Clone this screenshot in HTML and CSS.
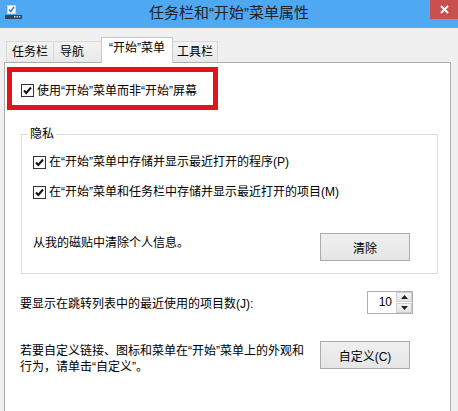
FILE: index.html
```html
<!DOCTYPE html>
<html lang="zh-CN">

<head>
  <meta charset="UTF-8">
  <meta name="viewport" content="width=device-width, initial-scale=1.0">
  <title>任务栏和“开始”菜单属性</title>
  <link rel="stylesheet" href="styles.css">
</head>

<body>
  <div class="window">
    <!-- 标题栏 -->
    <div class="titlebar">
      <div class="app-icon">
        <svg width="17" height="15" viewBox="0 0 17 15">
          <rect x="2.5" y="0.5" width="8" height="8" fill="#fff" stroke="#c9d6e6"/>
          <path d="M4 4.5 L5.8 6.5 L9 2" fill="none" stroke="#2f7fd6" stroke-width="1.6"/>
          <rect x="0" y="10" width="17" height="4" fill="#34435c"/>
          <rect x="9" y="11" width="1.5" height="1.5" fill="#c9d3e0"/>
          <rect x="11.5" y="11" width="1.5" height="1.5" fill="#c9d3e0"/>
          <rect x="14" y="11" width="1.5" height="1.5" fill="#c9d3e0"/>
        </svg>
      </div>
      <div class="title">任务栏和“开始”菜单属性</div>
      <div class="title-right">
        <div class="close">
          <svg width="9" height="9" viewBox="0 0 9 9">
            <path d="M1 1 L8 8 M8 1 L1 8" stroke="#fff" stroke-width="2"/>
          </svg>
        </div>
      </div>
    </div>

    <!-- 选项卡 -->
    <div class="tabs">
      <div class="tab">任务栏</div>
      <div class="tab tab-wide">导航</div>
      <div class="tab tab-active">“开始”菜单</div>
      <div class="tab tab-narrow">工具栏</div>
    </div>

    <div class="panel">
      <div class="highlight">
        <label class="check-row">
          <span class="check"><svg width="11" height="11" viewBox="0 0 11 11"><path d="M2 5.5 L4.3 8 L9 2.5" fill="none" stroke="#111" stroke-width="2"/></svg></span>
          使用“开始”菜单而非“开始”屏幕
        </label>
      </div>

      <fieldset class="group">
        <legend>隐私</legend>
        <label class="check-row group-row">
          <span class="check"><svg width="11" height="11" viewBox="0 0 11 11"><path d="M2 5.5 L4.3 8 L9 2.5" fill="none" stroke="#111" stroke-width="2"/></svg></span>
          在“开始”菜单中存储并显示最近打开的程序(P)
        </label>
        <label class="check-row group-row">
          <span class="check"><svg width="11" height="11" viewBox="0 0 11 11"><path d="M2 5.5 L4.3 8 L9 2.5" fill="none" stroke="#111" stroke-width="2"/></svg></span>
          在“开始”菜单和任务栏中存储并显示最近打开的项目(M)
        </label>
        <div class="clear-row">
          <span class="clear-text">从我的磁贴中清除个人信息。</span>
          <button class="button">清除</button>
        </div>
      </fieldset>

      <div class="jump-row">
        <span>要显示在跳转列表中的最近使用的项目数(J):</span>
        <div class="spinner">
          <span class="spinner-value">10</span>
          <div class="spinner-arrows">
            <span class="arrow"><svg width="7" height="4" viewBox="0 0 7 4"><path d="M0 4 L3.5 0 L7 4 Z" fill="#222"/></svg></span>
            <span class="arrow"><svg width="7" height="4" viewBox="0 0 7 4"><path d="M0 0 L3.5 4 L7 0 Z" fill="#222"/></svg></span>
          </div>
        </div>
      </div>

      <div class="custom-row">
        <p class="custom-text">若要自定义链接、图标和菜单在“开始”菜单上的外观和<br>行为，请单击“自定义”。</p>
        <button class="button">自定义(C)</button>
      </div>
    </div>
  </div>
</body>

</html>
```

FILE: styles.css
```css
body {
  margin: 0;
  padding: 0;
  background-color: #f0f0f0;
  color: #000;
  font-family: "Liberation Sans", "Noto Sans CJK SC", sans-serif;
  font-size: 12px;
  overflow: hidden;
}

.window {
  width: 458px;
  height: 411px;
  display: flex;
  flex-direction: column;
  overflow: hidden;
}

/* 标题栏 */
.titlebar {
  height: 28px;
  flex-shrink: 0;
  background-color: #4ea8f2;
  display: grid;
  grid-template-columns: 1fr auto 1fr;
}

.app-icon {
  padding: 5px 0 0 5px;
}

.title {
  font-size: 15px;
  line-height: 26px;
  color: #222;
}

.title-right {
  display: flex;
  justify-content: flex-end;
  align-items: flex-start;
}

.close {
  width: 28px;
  height: 19px;
  background-color: #c9504e;
  display: flex;
  align-items: center;
  justify-content: center;
}

/* 选项卡 */
.tabs {
  height: 34px;
  flex-shrink: 0;
  display: flex;
  align-items: flex-end;
  padding-left: 6px;
}

.tab {
  height: 21px;
  box-sizing: border-box;
  padding: 0 5px;
  line-height: 20px;
  white-space: nowrap;
  flex-shrink: 0;
  border: 1px solid #d9d9d9;
  border-bottom: none;
  background: linear-gradient(#f2f2f2, #e9e9e9);
  margin-left: -1px;
}

.tab:first-child {
  margin-left: 0;
}

.tab-wide {
  padding: 0 17px 0 6px;
}

.tab-narrow {
  padding: 0 4px;
}

.tab-active {
  position: relative;
  z-index: 1;
  height: 26px;
  padding: 0 7px;
  margin-bottom: -1px;
  line-height: 21px;
  background: #fff;
  border-color: #c9c9c9;
}

/* 内容面板 */
.panel {
  margin-left: 4px;
  width: 447px;
  height: 360px;
  flex-shrink: 0;
  box-sizing: border-box;
  background-color: #fff;
  border: 1px solid #acacac;
}

.highlight {
  margin: 4px 0 0 2px;
  width: 211px;
  height: 43px;
  box-sizing: border-box;
  border: 5px solid #e5111b;
  padding: 4px 0 0 9px;
  display: flex;
  align-items: center;
}

.check-row {
  display: flex;
  align-items: center;
  gap: 3px;
  line-height: 20px;
  white-space: nowrap;
}

.check {
  width: 13px;
  height: 13px;
  box-sizing: border-box;
  border: 1px solid #333;
  background: #fff;
  display: flex;
  align-items: center;
  justify-content: center;
}

.group {
  margin: 16px 12px 0 16px;
  padding: 0 0 12px 0;
  min-width: 0;
  border: 1px solid #dcdcdc;
}

.group legend {
  margin-left: 6px;
  padding: 0 2px;
  line-height: 16px;
}

.group-row {
  height: 20px;
  margin: 10px 0 0 11px;
}

.clear-row {
  margin: 31px 27px 0 11px;
  display: flex;
  justify-content: space-between;
  align-items: flex-start;
}

.clear-text {
  line-height: 20px;
}

.button {
  width: 90px;
  height: 28px;
  border: 1px solid #acacac;
  background: linear-gradient(#f0f0f0, #e5e5e5);
  font-family: inherit;
  font-size: 12px;
  color: #000;
  padding: 0;
}

.jump-row {
  margin: 17px 37px 0 15px;
  height: 23px;
  display: flex;
  justify-content: space-between;
  align-items: center;
}

.spinner {
  width: 46px;
  height: 23px;
  box-sizing: border-box;
  border: 1px solid #abadb3;
  display: flex;
}

.spinner-value {
  flex: 1;
  text-align: right;
  padding-right: 4px;
  line-height: 21px;
}

.spinner-arrows {
  width: 16px;
  display: flex;
  flex-direction: column;
  gap: 1px;
}

.arrow {
  flex: 1;
  display: flex;
  align-items: center;
  justify-content: center;
  background: linear-gradient(#f4f4f4, #e2e2e2);
  border: 1px solid #cfcfcf;
}

.custom-row {
  margin: 27px 40px 0 15px;
  display: flex;
  justify-content: space-between;
  align-items: flex-start;
}

.custom-text {
  margin: 0;
  padding-top: 2px;
  line-height: 16px;
  white-space: nowrap;
}
```
